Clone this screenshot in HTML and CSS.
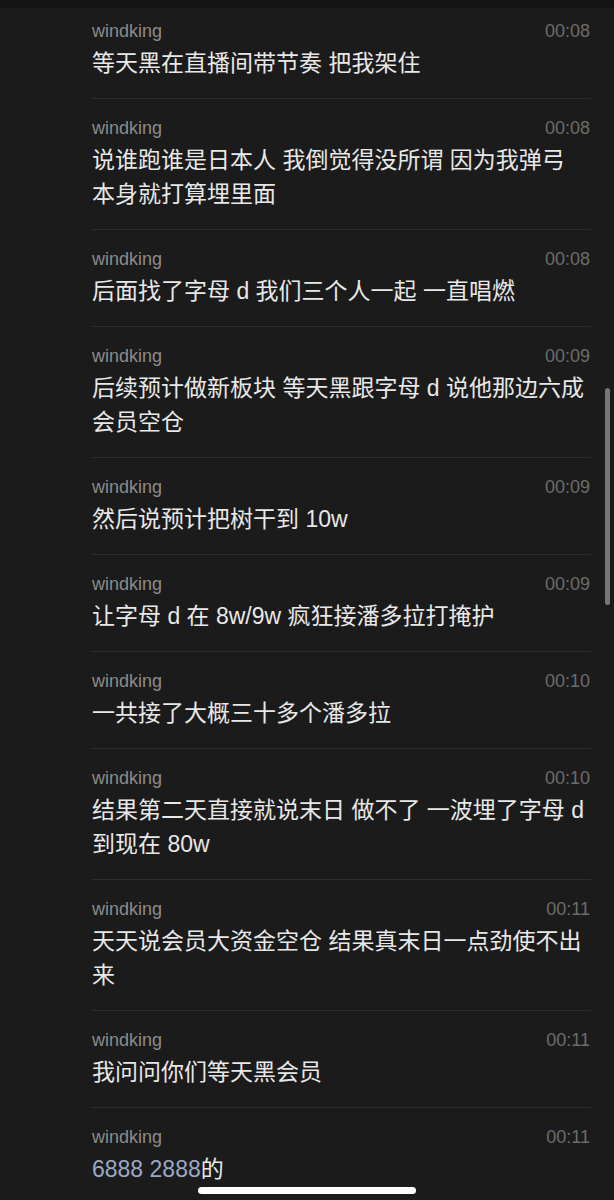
FILE: index.html
```html
<!DOCTYPE html>
<html lang="zh-CN">
<head>
    <meta charset="UTF-8">
    <meta name="viewport" content="width=device-width, initial-scale=1.0">
    <title>windking</title>
    <link rel="stylesheet" href="styles.css">
</head>
<body>

    <!-- top edge of the nav bar -->
    <div class="topbar"></div>

    <!-- Message list -->
    <div class="list">
        <div class="msg">
            <div class="msg-head"><span class="msg-user">windking</span><span class="msg-time">00:08</span></div>
            <p class="msg-text">等天黑在直播间带节奏 把我架住</p>
        </div>
        <div class="msg">
            <div class="msg-head"><span class="msg-user">windking</span><span class="msg-time">00:08</span></div>
            <p class="msg-text">说谁跑谁是日本人 我倒觉得没所谓 因为我弹弓本身就打算埋里面</p>
        </div>
        <div class="msg">
            <div class="msg-head"><span class="msg-user">windking</span><span class="msg-time">00:08</span></div>
            <p class="msg-text">后面找了字母 d 我们三个人一起 一直唱燃</p>
        </div>
        <div class="msg">
            <div class="msg-head"><span class="msg-user">windking</span><span class="msg-time">00:09</span></div>
            <p class="msg-text">后续预计做新板块 等天黑跟字母 d 说他那边六成会员空仓</p>
        </div>
        <div class="msg">
            <div class="msg-head"><span class="msg-user">windking</span><span class="msg-time">00:09</span></div>
            <p class="msg-text">然后说预计把树干到 10w</p>
        </div>
        <div class="msg">
            <div class="msg-head"><span class="msg-user">windking</span><span class="msg-time">00:09</span></div>
            <p class="msg-text">让字母 d 在 8w/9w 疯狂接潘多拉打掩护</p>
        </div>
        <div class="msg">
            <div class="msg-head"><span class="msg-user">windking</span><span class="msg-time">00:10</span></div>
            <p class="msg-text">一共接了大概三十多个潘多拉</p>
        </div>
        <div class="msg">
            <div class="msg-head"><span class="msg-user">windking</span><span class="msg-time">00:10</span></div>
            <p class="msg-text">结果第二天直接就说末日 做不了 一波埋了字母 d 到现在 80w</p>
        </div>
        <div class="msg">
            <div class="msg-head"><span class="msg-user">windking</span><span class="msg-time">00:11</span></div>
            <p class="msg-text">天天说会员大资金空仓 结果真末日一点劲使不出来</p>
        </div>
        <div class="msg">
            <div class="msg-head"><span class="msg-user">windking</span><span class="msg-time">00:11</span></div>
            <p class="msg-text">我问问你们等天黑会员</p>
        </div>
        <div class="msg">
            <div class="msg-head"><span class="msg-user">windking</span><span class="msg-time">00:11</span></div>
            <p class="msg-text"><a class="phone" href="tel:68882888">6888 2888</a>的</p>
        </div>
    </div>

    <!-- scroll indicator and home bar -->
    <div class="scrollbar"></div>
    <div class="home-bar"></div>

</body>
</html>
```

FILE: styles.css
```css
* {
    margin: 0;
    padding: 0;
    box-sizing: border-box;
}

html, body {
    height: 100%;
    overflow: hidden;
}

body {
    font-family: 'Liberation Sans', 'Noto Sans CJK SC', sans-serif;
    background: #1b1b1b;
    color: #e6e6e6;
}

.topbar {
    height: 8px;
    background: #131313;
}

.list {
    padding: 0 23px 0 92px;
}

.msg {
    padding: 19px 0 18px;
    border-bottom: 1px solid #2d2d2d;
}

.msg:first-child {
    padding-top: 13px;
}

.msg-head {
    display: flex;
    justify-content: space-between;
    align-items: center;
    height: 20px;
    font-size: 18px;
    line-height: 20px;
}

.msg-user {
    color: #8b8b8b;
}

.msg-time {
    color: #6c6c6c;
    margin-right: 1px;
}

.msg-text {
    margin-top: 5px;
    max-width: 494px;
    font-size: 23px;
    line-height: 34px;
    color: #e8e8e8;
}

.phone {
    color: #9aaac6;
    text-decoration: none;
}

.scrollbar {
    position: fixed;
    top: 388px;
    right: 4px;
    width: 5px;
    height: 217px;
    border-radius: 3px;
    background: #767676;
}

.home-bar {
    position: fixed;
    left: 198px;
    bottom: 6px;
    width: 218px;
    height: 7px;
    border-radius: 4px;
    background: #fff;
}
```
